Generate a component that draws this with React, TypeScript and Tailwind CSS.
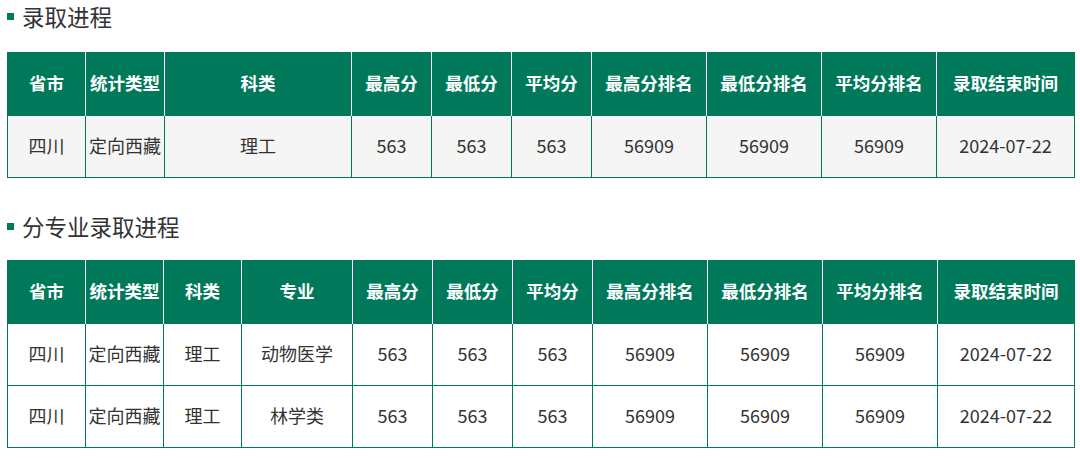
const FONT = "font-['Noto_Sans_CJK_SC','Noto_Sans',sans-serif]";

interface TableSpec {
  widths: number[];
  headers: string[];
  rows: string[][];
  bodyBg: string;
}

const TABLE1: TableSpec = {
  widths: [78, 79, 187, 80, 80, 80, 115, 115, 115, 138],
  headers: ["省市", "统计类型", "科类", "最高分", "最低分", "平均分", "最高分排名", "最低分排名", "平均分排名", "录取结束时间"],
  rows: [["四川", "定向西藏", "理工", "563", "563", "563", "56909", "56909", "56909", "2024-07-22"]],
  bodyBg: "bg-[#f5f5f5]",
};

const TABLE2: TableSpec = {
  widths: [78, 78, 78, 111, 80, 80, 80, 115, 115, 115, 137],
  headers: ["省市", "统计类型", "科类", "专业", "最高分", "最低分", "平均分", "最高分排名", "最低分排名", "平均分排名", "录取结束时间"],
  rows: [
    ["四川", "定向西藏", "理工", "动物医学", "563", "563", "563", "56909", "56909", "56909", "2024-07-22"],
    ["四川", "定向西藏", "理工", "林学类", "563", "563", "563", "56909", "56909", "56909", "2024-07-22"],
  ],
  bodyBg: "bg-white",
};

function SectionTitle({ text }: { text: string }) {
  return (
    <div className="flex h-[32px] items-center">
      <span className="h-[7px] w-[7px] shrink-0 bg-[#00785a]" />
      <span className="ml-[8px] text-[22.5px] leading-[32px] text-[#333]">{text}</span>
    </div>
  );
}

function DataTable({ spec }: { spec: TableSpec }) {
  return (
    <table className="w-[1067px] table-fixed border-collapse border border-[#00785a]">
      <colgroup>
        {spec.widths.map((w, i) => (
          <col key={i} style={{ width: w }} />
        ))}
      </colgroup>
      <thead>
        <tr className="h-[63px] bg-[#00785a]">
          {spec.headers.map((h, i) => (
            <th
              key={h}
              className={`p-0 pb-[2px] text-center align-middle text-[17.5px] font-bold text-white ${
                i < spec.headers.length - 1 ? "border-r border-white" : ""
              }`}
            >
              {h}
            </th>
          ))}
        </tr>
      </thead>
      <tbody>
        {spec.rows.map((row, r) => (
          <tr key={r} className={`h-[62px] ${spec.bodyBg}`}>
            {row.map((c, i) => (
              <td
                key={i}
                className="border border-[#00785a] p-0 pb-[3px] text-center align-middle text-[18px] text-[#333]"
              >
                {c}
              </td>
            ))}
          </tr>
        ))}
      </tbody>
    </table>
  );
}

export default function App() {
  return (
    <div className={`h-[458px] w-[1080px] bg-white px-[7px] ${FONT}`}>
      <SectionTitle text="录取进程" />
      <div className="mt-[20px]">
        <DataTable spec={TABLE1} />
      </div>
      <div className="mt-[32px]">
        <SectionTitle text="分专业录取进程" />
      </div>
      <div className="mt-[18px]">
        <DataTable spec={TABLE2} />
      </div>
    </div>
  );
}
